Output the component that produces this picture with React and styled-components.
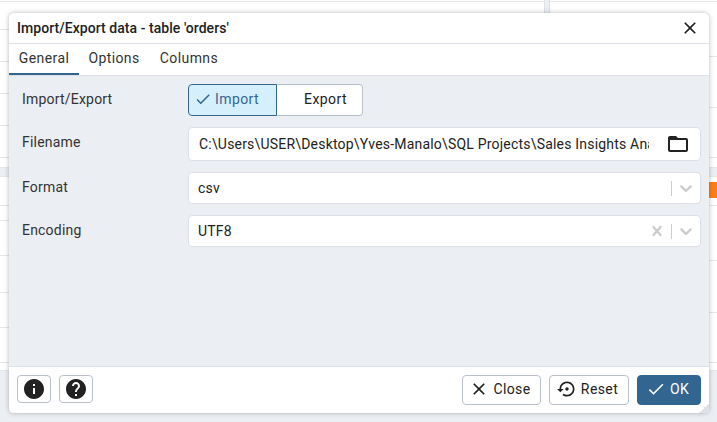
import styled, { createGlobalStyle } from 'styled-components';

const GlobalStyle = createGlobalStyle`
  html, body {
    margin: 0;
    padding: 0;
    width: 717px;
    height: 422px;
    overflow: hidden;
    background: #fff;
  }
  * {
    box-sizing: border-box;
  }
`;

const Page = styled.div`
  position: relative;
  width: 717px;
  height: 422px;
  overflow: hidden;
  font-family: Roboto, "Liberation Sans", sans-serif;
  font-size: 14px;
  color: #222;
`;

/* the table behind the dialog */
const Backdrop = styled.div`
  height: 100%;
  display: grid;
  grid-template-columns: 544px 6px 1fr;
  grid-template-rows: 371px 1fr;
`;

const BackdropColumn = styled.div`
  display: flex;
  flex-direction: column;
  background: #fff;
`;

const BackdropGutter = styled.div`
  background: #ebeef3;
  border-left: 1px solid #dde0e6;
  border-right: 1px solid #dde0e6;
`;

const BackdropFooter = styled.div`
  grid-column: 1 / -1;
  background: #ebeef3;
`;

const BackdropRow = styled.div`
  height: ${props => props.$h}px;
  flex: none;
  border-bottom: 1px solid #e4e6ea;
  background: ${props => (props.$band ? '#ebeef3' : '#fff')};
  display: flex;
  justify-content: flex-end;
  align-items: flex-end;
`;

const OrangeCell = styled.div`
  width: 8px;
  height: 16px;
  flex: none;
  margin-bottom: 7px;
  background: #fd7e14;
`;

const Dialog = styled.div`
  position: absolute;
  left: 9px;
  top: 13px;
  width: 700px;
  height: 400px;
  display: flex;
  flex-direction: column;
  background: #fff;
  border-radius: 5px;
  overflow: hidden;
  box-shadow: 0 0 5px rgba(0, 0, 0, 0.28);
`;

const TitleBar = styled.div`
  height: 31px;
  flex: none;
  display: flex;
  align-items: center;
  justify-content: space-between;
  padding: 0 9px 0 8px;
  border-bottom: 1px solid #dde0e6;
  font-weight: 500;
  letter-spacing: 0.05px;
  color: #222;
`;

const Tabs = styled.div`
  height: 32px;
  flex: none;
  display: flex;
  border-bottom: 1px solid #dde0e6;
`;

const Tab = styled.div`
  width: ${props => props.$w}px;
  height: 31px;
  display: flex;
  align-items: center;
  justify-content: center;
  padding-bottom: 2px;
  letter-spacing: 0.4px;
  color: #333;
  border-bottom: 2px solid ${props => (props.$active ? '#326690' : 'transparent')};
`;

const Body = styled.div`
  flex: 1;
  background: #ebeef3;
  padding: 8px 8px 0 13px;
  display: grid;
  grid-template-columns: 166px 1fr;
  grid-auto-rows: min-content;
  row-gap: 11px;
  align-items: start;
`;

const Label = styled.div`
  line-height: 16px;
  padding-top: 7px;
  color: #333;
  letter-spacing: 0.2px;
`;

const Toggle = styled.div`
  display: flex;
  width: 175px;
  height: 32px;
`;

const ToggleOption = styled.div`
  flex: none;
  width: ${props => props.$w}px;
  display: flex;
  align-items: center;
  justify-content: ${props => (props.$on ? 'flex-start' : 'center')};
  gap: 3px;
  padding: ${props => (props.$on ? '0 0 2px 5px' : '0 0 2px 12px')};
  letter-spacing: 0.4px;
  border: 1px solid ${props => (props.$on ? '#326690' : '#bac1cd')};
  border-left-width: ${props => (props.$on ? 1 : 0)}px;
  background: ${props => (props.$on ? '#d6effc' : '#fff')};
  color: ${props => (props.$on ? '#326690' : '#222')};
  border-radius: ${props => (props.$on ? '4px 0 0 4px' : '0 4px 4px 0')};
`;

const Field = styled.div`
  height: ${props => props.$h}px;
  display: flex;
  align-items: center;
  background: #fff;
  border: 1px solid #dde0e6;
  border-radius: 4px;
  padding-left: ${props => props.$pad}px;
  letter-spacing: 0.2px;
`;

const FileText = styled.div`
  width: 450px;
  overflow: hidden;
  white-space: nowrap;
`;

const FolderButton = styled.div`
  margin-left: auto;
  margin-right: 10px;
  display: flex;
`;

const Indicators = styled.div`
  margin-left: auto;
  display: flex;
  align-items: center;
  padding-right: 4px;
`;

const Separator = styled.span`
  width: 1px;
  height: 15px;
  margin: 0 4px;
  background: #ccc;
`;

const Footer = styled.div`
  height: 47px;
  flex: none;
  display: flex;
  align-items: flex-start;
  gap: 8px;
  padding: 8px 8px 0;
  border-top: 1px solid #dde0e6;
  background: #fff;
  position: relative;
`;

const Spacer = styled.div`
  flex: 1;
`;

const Button = styled.div`
  height: ${props => props.$h || 30}px;
  width: ${props => props.$w}px;
  display: flex;
  align-items: center;
  justify-content: center;
  gap: 4px;
  padding: ${props => (props.$bare ? '0' : '0 3px 2px 0')};
  border-radius: 4px;
  letter-spacing: 0.4px;
  border: 1px solid ${props => (props.$primary ? '#326690' : '#bac1cd')};
  background: ${props => (props.$primary ? '#326690' : '#fff')};
  color: ${props => (props.$primary ? '#fff' : '#222')};
`;

const Grip = styled.div`
  position: absolute;
  right: 0;
  bottom: 0;
  width: 10px;
  height: 10px;
  background: linear-gradient(135deg, transparent 50%, #dde0e6 50%);
`;

const Icon = ({ d, size = 24, box = 24, color = 'currentColor' }) => (
  <svg width={size} height={size} viewBox={`0 0 ${box} ${box}`} fill={color} style={{ display: 'block', flex: 'none' }}>
    <path d={d} />
  </svg>
);

const CLOSE = 'M19 6.41L17.59 5 12 10.59 6.41 5 5 6.41 10.59 12 5 17.59 6.41 19 12 13.41 17.59 19 19 17.59 13.41 12z';
const CHECK = 'M9 16.17L4.83 12l-1.42 1.41L9 19 21 7l-1.41-1.41z';
const INFO = 'M12 2C6.48 2 2 6.48 2 12s4.48 10 10 10 10-4.48 10-10S17.52 2 12 2zm1 15h-2v-6h2v6zm0-8h-2V7h2v2z';
const HELP = 'M12 2C6.48 2 2 6.48 2 12s4.48 10 10 10 10-4.48 10-10S17.52 2 12 2zm1 17h-2v-2h2v2zm2.07-7.75l-.9.92C13.45 12.9 13 13.5 13 15h-2v-.5c0-1.1.45-2.1 1.17-2.83l1.24-1.26c.37-.36.59-.86.59-1.41 0-1.1-.9-2-2-2s-2 .9-2 2H8c0-2.21 1.79-4 4-4s4 1.79 4 4c0 .88-.36 1.68-.93 2.25z';
const RESTORE = 'M14 12c0-1.1-.9-2-2-2s-2 .9-2 2 .9 2 2 2 2-.9 2-2zm-2-9c-4.97 0-9 4.03-9 9H0l4 4 4-4H5c0-3.87 3.13-7 7-7s7 3.13 7 7-3.13 7-7 7c-1.51 0-2.91-.49-4.06-1.3l-1.42 1.44C8.04 20.3 9.94 21 12 21c4.97 0 9-4.03 9-9s-4.03-9-9-9z';
const FOLDER = 'M20 6h-8l-2-2H4c-1.1 0-1.99.9-1.99 2L2 18c0 1.1.9 2 2 2h16c1.1 0 2-.9 2-2V8c0-1.1-.9-2-2-2zm0 12H4V8h16v10z';
const CHEVRON = 'M4.516 7.548c0.436-0.446 1.043-0.481 1.576 0l3.908 3.747 3.908-3.747c0.533-0.481 1.141-0.446 1.576 0 0.436 0.445 0.408 1.197 0 1.615-0.406 0.418-4.695 4.502-4.695 4.502-0.217 0.223-0.502 0.335-0.789 0.335s-0.572-0.112-0.789-0.335c0 0-4.287-4.084-4.695-4.502s-0.436-1.17 0-1.615z';
const CLEAR = 'M14.348 14.849c-0.469 0.469-1.229 0.469-1.697 0l-2.651-3.030-2.651 3.029c-0.469 0.469-1.229 0.469-1.697 0-0.469-0.469-0.469-1.229 0-1.697l2.758-3.15-2.759-3.152c-0.469-0.469-0.469-1.228 0-1.697s1.228-0.469 1.697 0l2.652 3.031 2.651-3.031c0.469-0.469 1.228-0.469 1.697 0s0.469 1.229 0 1.697l-2.758 3.152 2.758 3.15c0.469 0.469 0.469 1.229 0 1.698z';

const leftRows = [2, 28, 32, 32, 32, 32, 10, 9, 29, 15, 35, 37, 35, 35, 8];
const rightRows = [2, 55, 51, 50, 10, 9, 29, 55, 52, 50, 8];

const App = () => (
  <Page>
    <GlobalStyle />
    <Backdrop>
      <BackdropColumn>
        {leftRows.map((h, i) => (
          <BackdropRow key={i} $h={h} $band={i === 7} />
        ))}
      </BackdropColumn>
      <BackdropGutter />
      <BackdropColumn>
        {rightRows.map((h, i) => (
          <BackdropRow key={i} $h={h} $band={i === 5}>
            {i === 6 && <OrangeCell />}
          </BackdropRow>
        ))}
      </BackdropColumn>
      <BackdropFooter />
    </Backdrop>

    <Dialog>
      <TitleBar>
        Import/Export data - table 'orders'
        <Icon d={CLOSE} size={20} />
      </TitleBar>
      <Tabs>
        <Tab $w={70} $active>General</Tab>
        <Tab $w={70}>Options</Tab>
        <Tab $w={80}>Columns</Tab>
      </Tabs>
      <Body>
        <Label>Import/Export</Label>
        <Toggle>
          <ToggleOption $w={89} $on>
            <Icon d={CHECK} size={18} />
            Import
          </ToggleOption>
          <ToggleOption $w={86}>Export</ToggleOption>
        </Toggle>
        <Label>Filename</Label>
        <Field $h={34} $pad={10}>
          <FileText>C:\Users\USER\Desktop\Yves-Manalo\SQL Projects\Sales Insights Analysis\orders.csv</FileText>
          <FolderButton>
            <Icon d={FOLDER} />
          </FolderButton>
        </Field>
        <Label>Format</Label>
        <Field $h={32} $pad={9}>
          csv
          <Indicators>
            <Separator />
            <Icon d={CHEVRON} size={20} box={20} color="#ccc" />
          </Indicators>
        </Field>
        <Label>Encoding</Label>
        <Field $h={32} $pad={9}>
          UTF8
          <Indicators>
            <Icon d={CLEAR} size={20} box={20} color="#ccc" />
            <Separator />
            <Icon d={CHEVRON} size={20} box={20} color="#ccc" />
          </Indicators>
        </Field>
      </Body>
      <Footer>
        <Button $w={34} $h={28} $bare>
          <Icon d={INFO} color="#222" />
        </Button>
        <Button $w={34} $h={28} $bare>
          <Icon d={HELP} color="#222" />
        </Button>
        <Spacer />
        <Button $w={79}>
          <Icon d={CLOSE} size={20} />
          Close
        </Button>
        <Button $w={80}>
          <Icon d={RESTORE} size={20} />
          Reset
        </Button>
        <Button $w={64} $primary>
          <Icon d={CHECK} size={20} />
          OK
        </Button>
        <Grip />
      </Footer>
    </Dialog>
  </Page>
);

export default App;
